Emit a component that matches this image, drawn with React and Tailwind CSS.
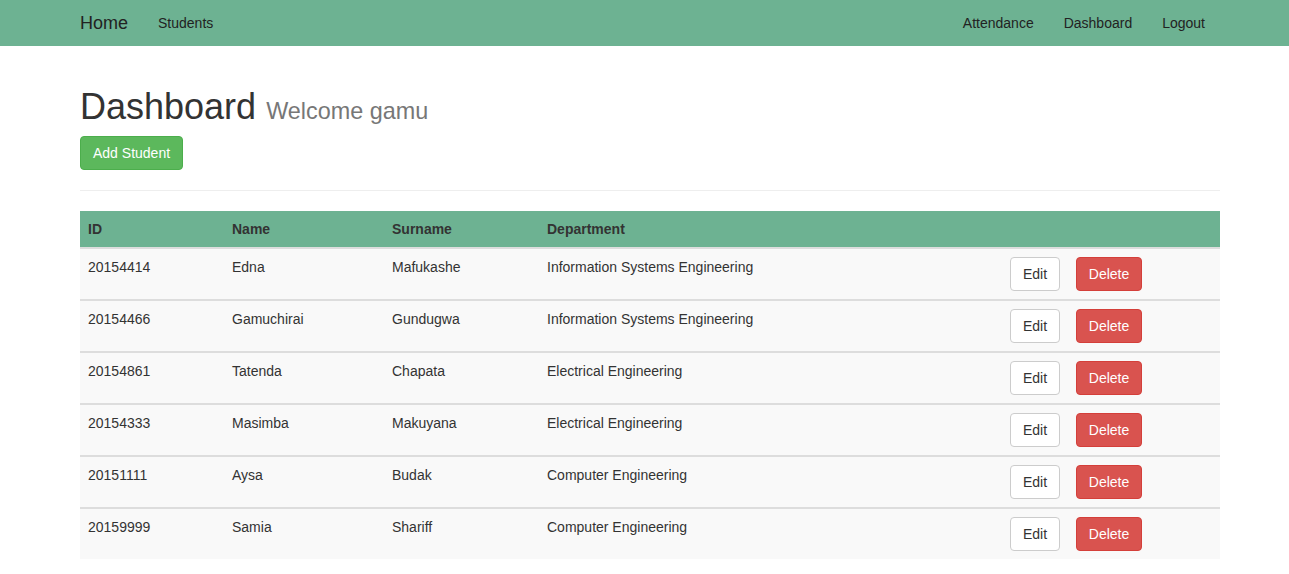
const students = [
  { id: '20154414', name: 'Edna', surname: 'Mafukashe', dept: 'Information Systems Engineering' },
  { id: '20154466', name: 'Gamuchirai', surname: 'Gundugwa', dept: 'Information Systems Engineering' },
  { id: '20154861', name: 'Tatenda', surname: 'Chapata', dept: 'Electrical Engineering' },
  { id: '20154333', name: 'Masimba', surname: 'Makuyana', dept: 'Electrical Engineering' },
  { id: '20151111', name: 'Aysa', surname: 'Budak', dept: 'Computer Engineering' },
  { id: '20159999', name: 'Samia', surname: 'Shariff', dept: 'Computer Engineering' },
];

export default function App() {
  return (
    <div className="min-h-[574px] bg-white text-[14px] leading-[20px] text-[#333]" style={{ fontFamily: '"Liberation Sans", Arial, sans-serif' }}>
      {/* Navbar */}
      <nav className="h-[46px] bg-[#6db292]">
        <div className="ml-[80px] w-[1140px] h-full flex items-center justify-between">
          <div className="flex items-center">
            <a className="text-[18px] text-[#222]">Home</a>
            <a className="ml-[30px] text-[#222]">Students</a>
          </div>
          <div className="flex items-center gap-[30px] pr-[15px] text-[#222]">
            <a>Attendance</a>
            <a>Dashboard</a>
            <a>Logout</a>
          </div>
        </div>
      </nav>

      <div className="ml-[80px] w-[1140px]">
        {/* Header */}
        <div className="pt-[41px] pb-[20px] border-b border-[#eee]">
          <h1 className="text-[36px] leading-[39.6px] text-[#333]">
            Dashboard <small className="text-[23.4px] text-[#777]">Welcome gamu</small>
          </h1>
          <button className="mt-[4px] h-[34px] px-[12px] rounded-[4px] bg-[#5cb85c] border border-[#4cae4c] text-white">
            Add Student
          </button>
        </div>

        {/* Table */}
        <table className="mt-[20px] w-full border-collapse mb-[15px]">
          <thead>
            <tr className="bg-[#6db292] text-left">
              <th className="w-[144px] px-[8px] py-[8px] font-bold border-b-2 border-[#ddd]">ID</th>
              <th className="w-[160px] px-[8px] py-[8px] font-bold border-b-2 border-[#ddd]">Name</th>
              <th className="w-[155px] px-[8px] py-[8px] font-bold border-b-2 border-[#ddd]">Surname</th>
              <th className="px-[8px] py-[8px] font-bold border-b-2 border-[#ddd]">Department</th>
              <th className="w-[218px] px-[8px] py-[8px] border-b-2 border-[#ddd]"></th>
            </tr>
          </thead>
          <tbody>
            {students.map((s, i) => (
              <tr key={s.id} className={`bg-[#f9f9f9] align-top ${i > 0 ? 'border-t-2 border-[#ddd]' : ''}`}>
                <td className="px-[8px] pt-[8px] pb-[8px]">{s.id}</td>
                <td className="px-[8px] pt-[8px]">{s.name}</td>
                <td className="px-[8px] pt-[8px]">{s.surname}</td>
                <td className="px-[8px] pt-[8px]">{s.dept}</td>
                <td className="px-[8px] py-[8px]">
                  <div className="flex gap-[16px]">
                    <button className="h-[34px] w-[50px] rounded-[4px] bg-white border border-[#ccc] text-[#333]">Edit</button>
                    <button className="h-[34px] w-[66px] rounded-[4px] bg-[#d9534f] border border-[#d43f3a] text-white">Delete</button>
                  </div>
                </td>
              </tr>
            ))}
          </tbody>
        </table>
      </div>
    </div>
  );
}
